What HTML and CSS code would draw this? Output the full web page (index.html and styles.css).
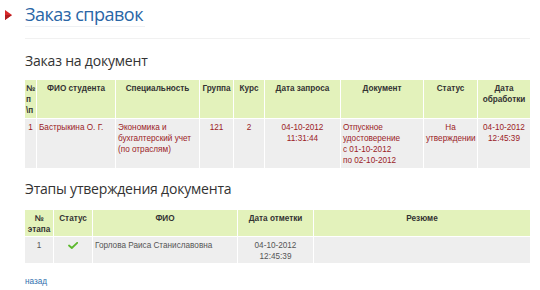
FILE: index.html
```html
<!DOCTYPE html>
<html lang="ru">
<head>
<meta charset="utf-8">
<link rel="stylesheet" href="styles.css">
</head>
<body>
<div class="page">
  <div class="title-row">
    <svg class="bullet" width="7" height="10" viewBox="0 0 7 10"><path d="M0 0 L7 5 L0 10 Z" fill="#d8282a"/><path d="M0 5 L7 5 L0 10 Z" fill="#b01d1f"/></svg>
    <h1 class="title">Заказ справок</h1>
  </div>
  <div class="sep"></div>

  <h2 class="section">Заказ на документ</h2>
  <table class="grid doc">
    <colgroup>
      <col style="width:11px"><col style="width:78px"><col style="width:83px"><col style="width:33px"><col style="width:30px"><col style="width:75px"><col style="width:82px"><col style="width:53px"><col>
    </colgroup>
    <thead>
      <tr>
        <th class="left">№<br>п<br>\п</th>
        <th>ФИО студента</th>
        <th>Специальность</th>
        <th>Группа</th>
        <th>Курс</th>
        <th>Дата запроса</th>
        <th>Документ</th>
        <th>Статус</th>
        <th>Дата<br>обработки</th>
      </tr>
    </thead>
    <tbody>
      <tr class="red">
        <td>1</td>
        <td class="left">Бастрыкина О. Г.</td>
        <td class="left">Экономика и<br>бухгалтерский учет<br>(по отраслям)</td>
        <td>121</td>
        <td>2</td>
        <td>04-10-2012<br>11:31:44</td>
        <td class="left">Отпускное<br>удостоверение<br>с 01-10-2012<br>по 02-10-2012</td>
        <td>На<br>утверждении</td>
        <td>04-10-2012<br>12:45:39</td>
      </tr>
    </tbody>
  </table>

  <h2 class="section second">Этапы утверждения документа</h2>
  <table class="grid stages">
    <colgroup>
      <col style="width:28px"><col style="width:38px"><col style="width:144px"><col style="width:75px"><col>
    </colgroup>
    <thead>
      <tr>
        <th>№<br>этапа</th>
        <th>Статус</th>
        <th>ФИО</th>
        <th>Дата отметки</th>
        <th>Резюме</th>
      </tr>
    </thead>
    <tbody>
      <tr class="gray">
        <td>1</td>
        <td><svg class="check" width="10" height="7" viewBox="0 0 10 7"><path d="M1 3.5 L3.8 6 L9.2 0.8" fill="none" stroke="#5cb82e" stroke-width="1.8" stroke-linecap="round" stroke-linejoin="round"/></svg></td>
        <td class="left">Горлова Раиса Станиславовна</td>
        <td>04-10-2012<br>12:45:39</td>
        <td></td>
      </tr>
    </tbody>
  </table>

  <a class="back" href="#">назад</a>
</div>
</body>
</html>
```
FILE: styles.css
```css
html, body {
  margin: 0;
  padding: 0;
  background: #ffffff;
}
.page {
  padding: 0 10px 0 25px;
  font-family: "Liberation Sans", Arial, sans-serif;
}
.title-row {
  display: flex;
  align-items: center;
  gap: 13px;
  margin-left: -20px;
  padding-top: 3px;
}
.bullet {
  display: block;
  margin-top: -1px;
}
.title {
  margin: 0;
  font-family: "Open Sans", sans-serif;
  font-weight: normal;
  font-size: 18px;
  letter-spacing: -0.5px;
  line-height: 23px;
  color: #2a66a6;
  padding-right: 2px;
  border-bottom: 1px solid #eef0f3;
}
.sep {
  margin-top: 11px;
  border-top: 1px solid #f1f1f1;
}
.section {
  margin: 13px 0 0 0;
  font-family: "Open Sans", sans-serif;
  font-weight: normal;
  font-size: 14px;
  letter-spacing: -0.2px;
  line-height: 18px;
  color: #333333;
}
.section.second {
  margin-top: 11px;
}
.grid {
  width: 507px;
  table-layout: fixed;
  border-collapse: separate;
  border-spacing: 1px;
  margin: 9px 0 0 -1px;
  font-size: 8.2px;
  line-height: 11px;
}
.grid th {
  background: #e3f2bb;
  color: #333333;
  font-weight: bold;
  text-align: center;
  vertical-align: top;
  padding: 3px 1px 2px;
}
.grid td {
  background: #eeeeee;
  text-align: center;
  vertical-align: top;
  padding: 3px 2px 2px;
}
.grid .left {
  text-align: left;
}
.stages {
  margin-top: 11px;
}
.stages th,
.stages td {
  padding-bottom: 1px;
}
.red td {
  color: #9b2226;
}
.gray td {
  color: #555555;
}
.check {
  display: inline-block;
  margin-top: 2px;
}
.back {
  display: inline-block;
  margin-top: 13px;
  font-size: 8.2px;
  color: #2f6fae;
  text-decoration: none;
}
```
